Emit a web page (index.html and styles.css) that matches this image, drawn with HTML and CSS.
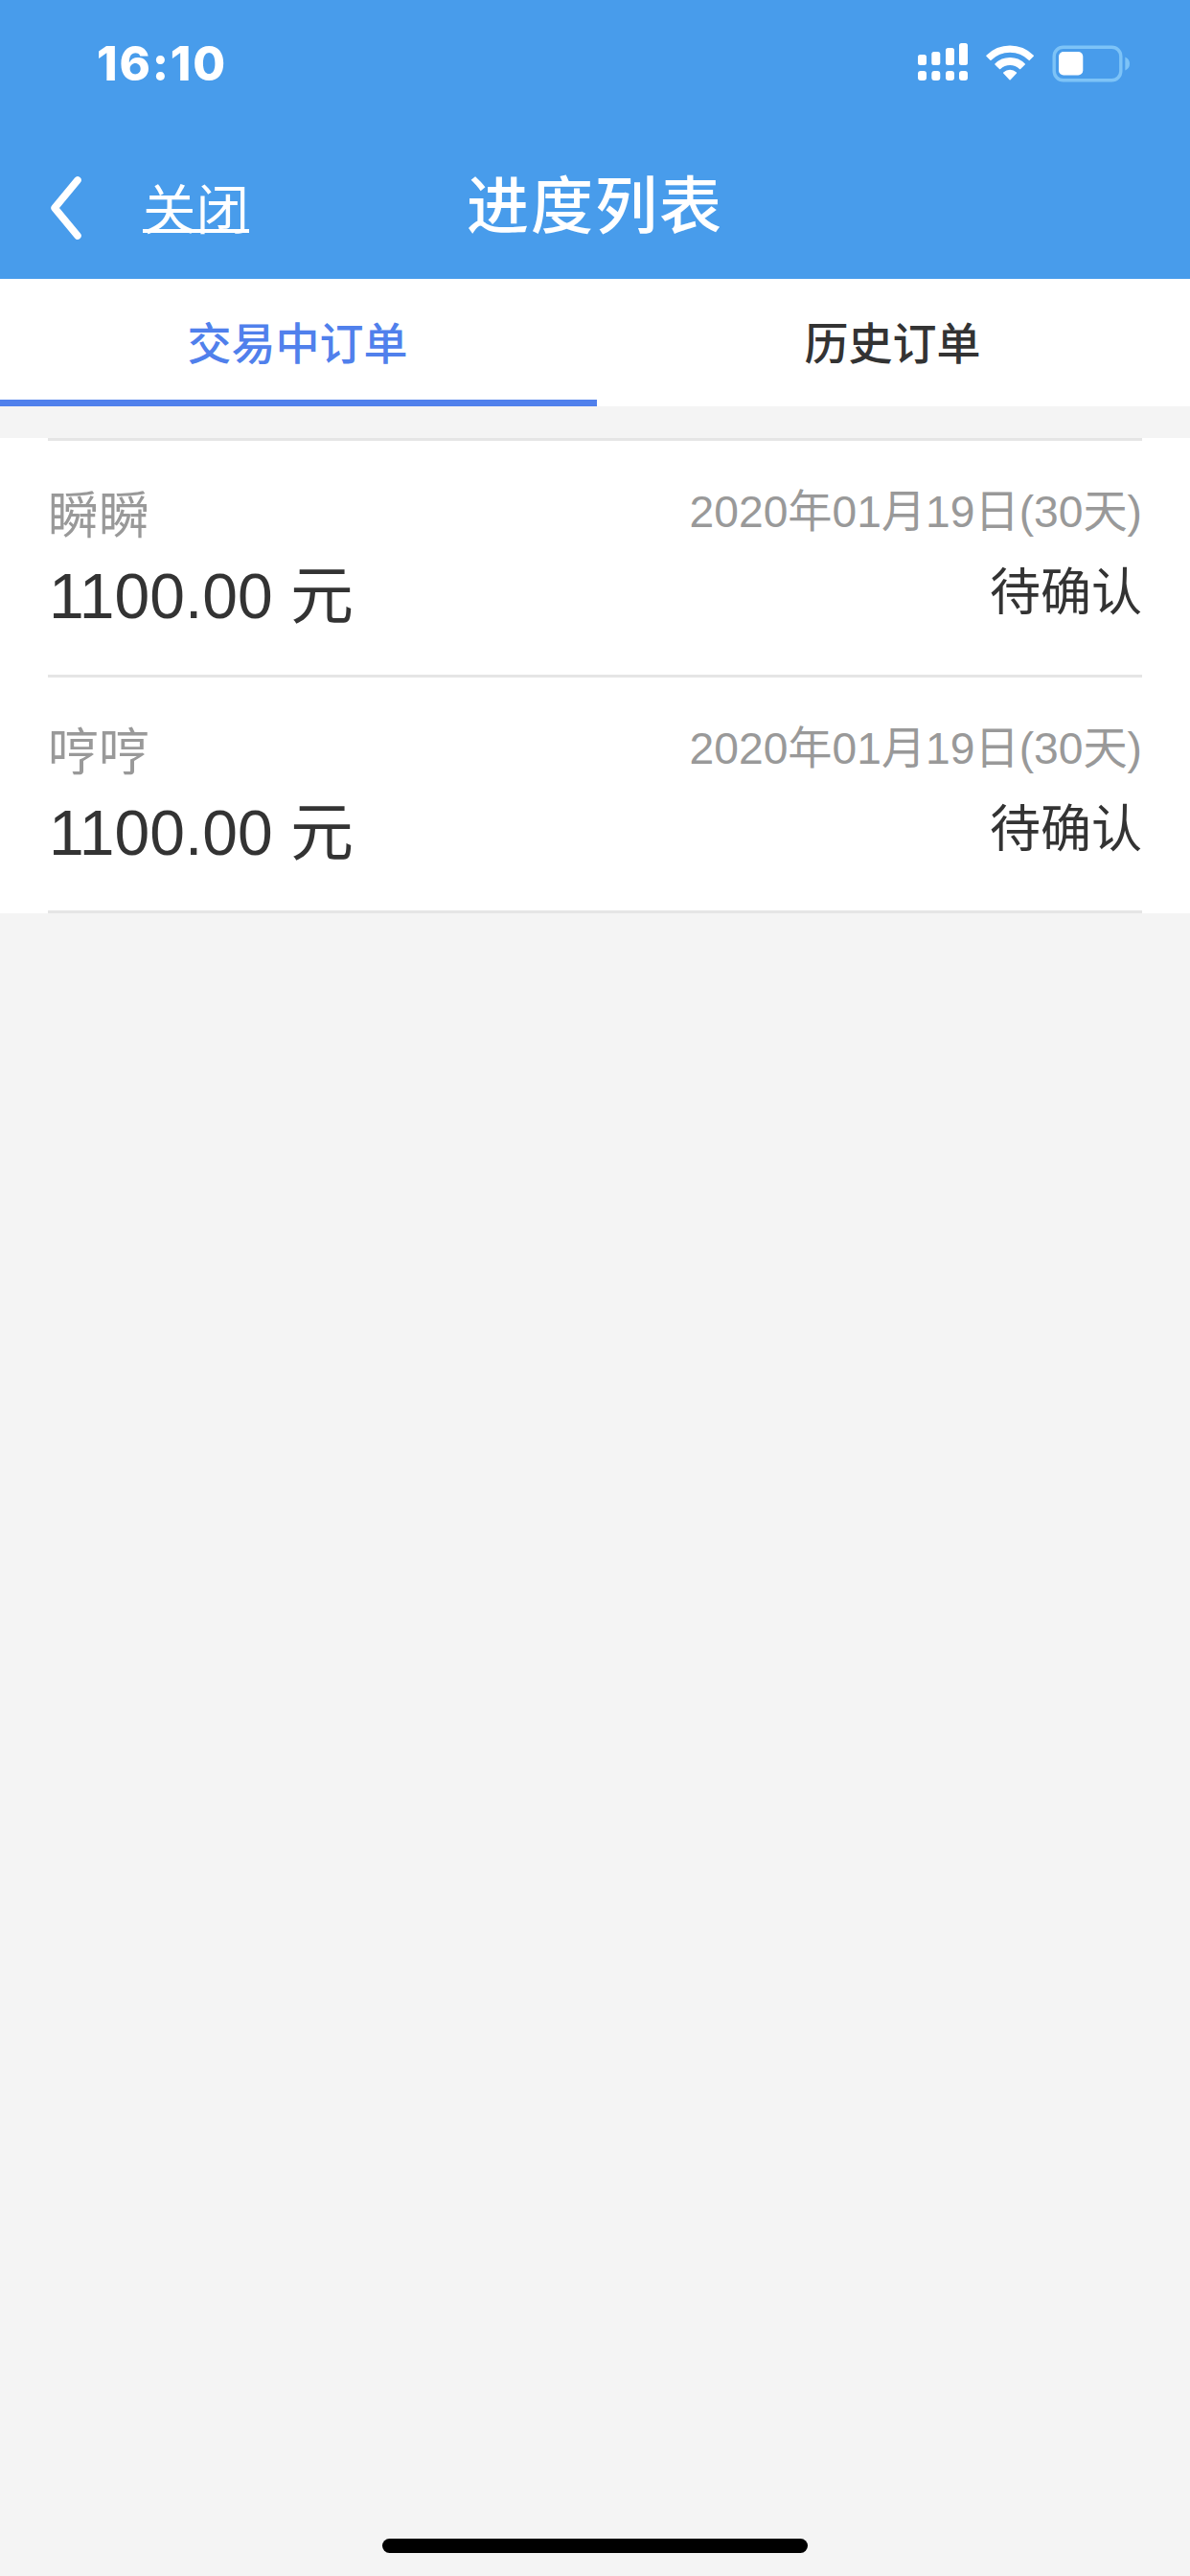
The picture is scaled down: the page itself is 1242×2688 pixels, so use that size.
FILE: index.html
```html
<!DOCTYPE html>
<html lang="zh-CN">
<head>
  <meta charset="UTF-8" />
  <title>进度列表</title>
  <link rel="stylesheet" href="styles.css">
</head>
<body>
  <header class="header">
    <div class="status-bar">
      <span class="time">16:10</span>
      <svg class="status-icons" width="224" height="44" viewBox="0 0 224 44">
        <!-- signal -->
        <g fill="#fff">
          <rect x="3" y="15" width="9" height="11" rx="2.5" />
          <rect x="17.3" y="12" width="9" height="14" rx="2.5" />
          <rect x="32" y="8" width="9" height="18" rx="2.5" />
          <rect x="46" y="3" width="9" height="23" rx="2.5" />
          <rect x="3" y="32" width="9" height="10" rx="3" />
          <rect x="17.3" y="32" width="9" height="10" rx="3" />
          <rect x="32" y="32" width="9" height="10" rx="3" />
          <rect x="46" y="32" width="9" height="10" rx="3" />
        </g>
        <!-- wifi -->
        <g fill="#fff" stroke="#fff" stroke-width="1.6" stroke-linejoin="round">
          <path d="M75 16.3 A34 34 0 0 1 123.2 16.3 L119.2 20.3 A28.5 28.5 0 0 0 79 20.3 Z" />
          <path d="M84 25 A21.5 21.5 0 0 1 114.2 25 L109.6 29.4 A15 15 0 0 0 88.6 29.4 Z" />
          <path d="M92.8 34 A9.5 9.5 0 0 1 105.4 34 L99.1 40.6 Z" />
        </g>
        <!-- battery -->
        <rect x="145.2" y="7.2" width="69.6" height="34.6" rx="9.5" fill="none" stroke="#7dc3f7" stroke-width="3.4" />
        <rect x="150" y="12" width="25.3" height="24.5" rx="5" fill="#fff" />
        <path d="M219.3 17.5 Q224 19.5 224 24.5 Q224 29.5 219.3 31.5 Z" fill="#7dc3f7" />
      </svg>
    </div>
    <div class="nav">
      <svg class="back" width="34" height="68" viewBox="0 0 34 68">
        <path d="M29 5 L5 34 L29 63" fill="none" stroke="#fff" stroke-width="7.5" stroke-linecap="round" stroke-linejoin="round" />
      </svg>
      <a class="close">关闭</a>
      <h1 class="title">进度列表</h1>
    </div>
  </header>

  <div class="tabs">
    <div class="tab active">交易中订单</div>
    <div class="tab">历史订单</div>
  </div>

  <div class="list">
    <div class="order">
      <div class="left">
        <div class="name">瞬瞬</div>
        <div class="amount">1100.00 元</div>
      </div>
      <div class="right">
        <div class="date">2020年01月19日(30天)</div>
        <div class="state">待确认</div>
      </div>
    </div>
    <div class="order">
      <div class="left">
        <div class="name">哼哼</div>
        <div class="amount">1100.00 元</div>
      </div>
      <div class="right">
        <div class="date">2020年01月19日(30天)</div>
        <div class="state">待确认</div>
      </div>
    </div>
  </div>

  <div class="home-bar"></div>
</body>
</html>
```
FILE: styles.css
```css
* { box-sizing: border-box; }
body { display: flex; flex-direction: column; height: 2688px; margin: 0; background: #f4f4f4; color: #333; font-family: "Liberation Sans", "Noto Sans CJK SC", sans-serif; }

.header { height: 291px; background: #489ceb; color: #fff; }
.status-bar { display: flex; justify-content: space-between; height: 142px; padding: 42px 63px 0 101px; }
.time { font-family: Inter, sans-serif; font-size: 49px; font-weight: 800; line-height: 50px; letter-spacing: 1.8px; }
.status-icons { display: block; }
.nav { display: grid; grid-template-columns: 489px 1fr 489px; grid-template-rows: 149px; }
.back { grid-area: 1 / 1; margin: 41px 0 0 52px; }
.close { grid-area: 1 / 1; justify-self: start; margin: 40px 0 0 149px; font-size: 55.5px; line-height: 76px; text-decoration: underline; text-decoration-thickness: 4px; text-decoration-skip-ink: none; text-underline-offset: 0; }
.title { grid-area: 1 / 2; margin: 26px 0 0 -2px; font-size: 65px; font-weight: 500; line-height: 96px; letter-spacing: 2px; white-space: nowrap; }

.tabs { display: flex; height: 133px; background: #fff; }
.tab { flex: 1; height: 133px; padding-right: 2px; font-size: 46px; font-weight: 500; line-height: 136px; text-align: center; border-bottom: 7px solid transparent; }
.tab.active { flex: 0 0 623px; color: #5080ec; border-bottom-color: #5080ec; }

.list { margin-top: 33px; padding: 0 50px; background: #fff; }
.order { display: flex; justify-content: space-between; height: 247px; border-top: 3px solid #e5e5e5; }
.order:last-child { height: 249px; border-bottom: 3px solid #e5e5e5; }
.left { padding-top: 39px; }
.right { padding-top: 39px; text-align: right; }
.name { color: #999; font-size: 53px; line-height: 80px; }
.amount { font-size: 66px; line-height: 86px; text-indent: 1px; }
.date { color: #999; font-size: 46.2px; line-height: 70px; }
.state { font-size: 53px; line-height: 100px; }

.home-bar { width: 444px; height: 15px; margin: auto auto 24px; background: #000; border-radius: 8px; }
```
